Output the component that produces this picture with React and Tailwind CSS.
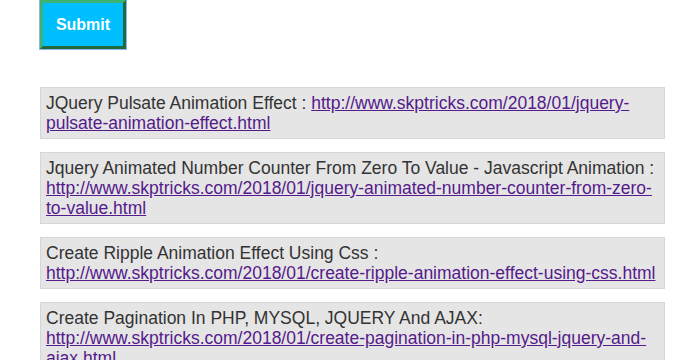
const links = [
  {
    title: 'JQuery Pulsate Animation Effect : ',
    url: 'http://www.skptricks.com/2018/01/jquery-pulsate-animation-effect.html',
  },
  {
    title: 'Jquery Animated Number Counter From Zero To Value - Javascript Animation : ',
    url: 'http://www.skptricks.com/2018/01/jquery-animated-number-counter-from-zero-to-value.html',
  },
  {
    title: 'Create Ripple Animation Effect Using Css : ',
    url: 'http://www.skptricks.com/2018/01/create-ripple-animation-effect-using-css.html',
  },
  {
    title: 'Create Pagination In PHP, MYSQL, JQUERY And AJAX: ',
    url: 'http://www.skptricks.com/2018/01/create-pagination-in-php-mysql-jquery-and-ajax.html',
  },
];

export default function App() {
  return (
    <div className="min-h-screen bg-white font-['Liberation_Sans',Arial,sans-serif] text-[#333]">
      <div className="pl-10">
        <button className="h-[49px] w-[86px] border-[3px] border-t-[#3cb371] border-l-[#3cb371] border-r-[#1d6b3f] border-b-[#1d6b3f] bg-[#00bfff] text-[16px] font-bold text-white outline outline-1 outline-[#8fb4ec]">
          Submit
        </button>
      </div>

      <div className="mt-[38px] ml-10 flex w-[625px] flex-col gap-[13px]">
        {links.map((l) => (
          <div key={l.url} className="border border-[#d6d6d6] bg-[#e5e5e5] px-[5px] py-[5px] text-[17.5px] leading-[20px]">
            {l.title}
            <a href="#" className="text-[#551a8b] underline">
              {l.url}
            </a>
          </div>
        ))}
      </div>
    </div>
  );
}
